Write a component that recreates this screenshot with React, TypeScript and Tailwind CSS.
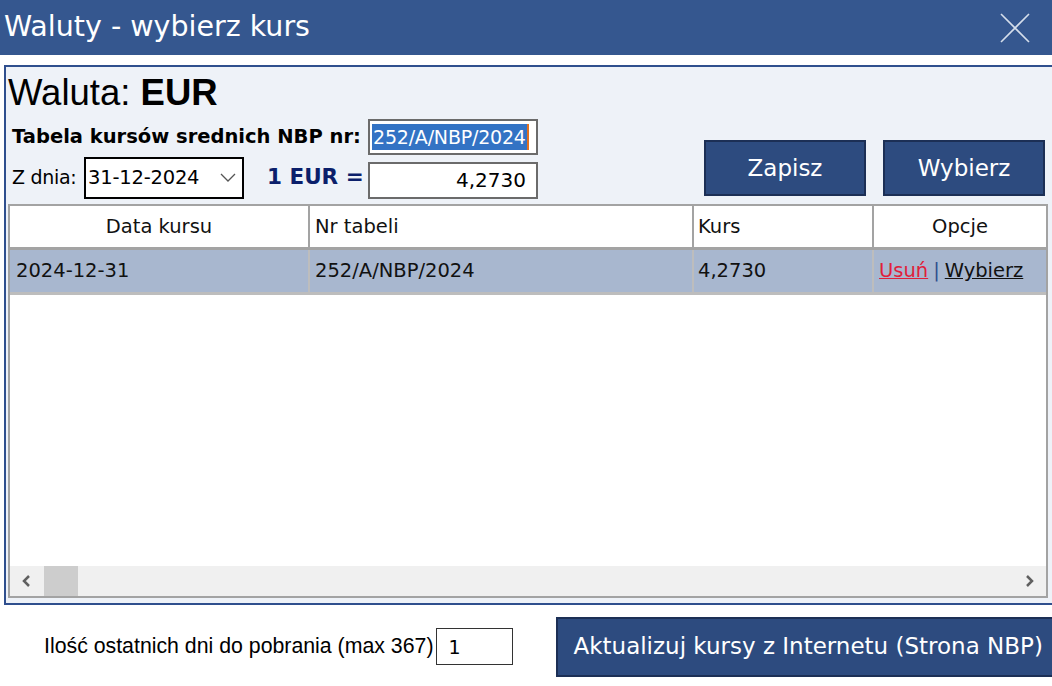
import { useState } from "react";

const rows = [
  { date: "2024-12-31", nr: "252/A/NBP/2024", kurs: "4,2730" },
];

const App = () => {
  const [days, setDays] = useState<string>("1");

  return (
    <div className="w-[1052px] h-[686px] bg-white overflow-hidden flex flex-col font-['DejaVu_Sans',sans-serif] text-black">
      {/* pasek tytulu */}
      <div className="h-[55px] bg-[#35578f] flex items-center justify-between pl-[4px] pr-[21px] shrink-0">
        <span className="text-white text-[28.5px] leading-none">Waluty - wybierz kurs</span>
        <svg width="32" height="32" viewBox="0 0 32 32">
          <path d="M2 2 L30 30 M30 2 L2 30" stroke="#d5deeb" strokeWidth="1.6" />
        </svg>
      </div>

      <div className="h-[10px] shrink-0" />

      {/* panel glowny */}
      <div className="ml-[4px] h-[540px] border-l-2 border-t-2 border-b-2 border-[#2f4f8e] bg-[#eef2f8] flex flex-col pl-[2px] pr-[4px] shrink-0">
        <div className="flex h-[137px] shrink-0">
          <div className="flex flex-col w-[540px]">
            <div className="h-[52px] flex items-center font-['Liberation_Sans',sans-serif] text-[36.5px] leading-none">
              Waluta:&nbsp;<b>EUR</b>
            </div>
            <div className="flex items-center h-[36px] pl-[4px]">
              <span className="font-bold text-[19.5px] w-[356px] whitespace-nowrap">Tabela kursów srednich NBP nr:</span>
              <div className="w-[170px] h-[36px] border-2 border-[#6b6b6b] bg-white flex items-center px-[2px]">
                <span className="bg-[#3373c4] text-white text-[19px] tracking-[-0.2px] px-[1px] leading-[26px] whitespace-nowrap">252/A/NBP/2024</span>
                <span className="w-[2px] h-[26px] bg-[#e07020]" />
              </div>
            </div>
            <div className="flex items-center h-[43px] pl-[4px] mt-[1px]">
              <span className="text-[19px] w-[72px] tracking-[-0.3px] whitespace-nowrap">Z dnia:</span>
              <div className="w-[160px] h-[42px] border-2 border-black bg-white flex items-center justify-between pl-[2px] pr-[6px]">
                <span className="text-[19.5px] tracking-[-0.2px]">31-12-2024</span>
                <svg width="16" height="10" viewBox="0 0 16 10">
                  <path d="M1 1 L8 8 L15 1" fill="none" stroke="#555" strokeWidth="1.3" />
                </svg>
              </div>
              <span className="font-bold text-[#0b1f6b] text-[21.5px] w-[124px] pl-[23px] whitespace-nowrap">1 EUR =</span>
              <div className="w-[170px] h-[37px] border-2 border-[#6b6b6b] bg-white flex items-center justify-end pr-[10px] mt-[5px]">
                <span className="text-[20px]">4,2730</span>
              </div>
            </div>
          </div>
          <div className="flex gap-[17px] pl-[156px] pt-[73px]">
            <button className="w-[162px] h-[56px] bg-[#2d4b7f] border-2 border-[#1c2f55] text-white text-[23px]">Zapisz</button>
            <button className="w-[162px] h-[56px] bg-[#2d4b7f] border-2 border-[#1c2f55] text-white text-[23px]">Wybierz</button>
          </div>
        </div>

        {/* siatka */}
        <div className="h-[394px] border-2 border-[#a3a3a3] bg-white flex flex-col shrink-0">
          <div className="flex h-[44px] border-b-[3px] border-[#a3a3a3] text-[19.5px] text-[#111]">
            <div className="w-[300px] border-r-2 border-[#a3a3a3] flex items-center justify-center">Data kursu</div>
            <div className="w-[384px] border-r-2 border-[#a3a3a3] flex items-center pl-[5px]">Nr tabeli</div>
            <div className="w-[180px] border-r-2 border-[#a3a3a3] flex items-center pl-[4px]">Kurs</div>
            <div className="flex-1 flex items-center justify-center">Opcje</div>
          </div>
          {rows.map((r) => (
            <div key={r.nr} className="flex h-[45px] bg-[#a8b7cf] border-b-[3px] border-[#bdbdbd] text-[19.5px] text-[#111]">
              <div className="w-[300px] border-r-2 border-[#bdbdbd] flex items-center pl-[6px]">{r.date}</div>
              <div className="w-[384px] border-r-2 border-[#bdbdbd] flex items-center pl-[5px]">{r.nr}</div>
              <div className="w-[180px] border-r-2 border-[#bdbdbd] flex items-center pl-[4px]">{r.kurs}</div>
              <div className="flex-1 flex items-center pl-[5px] whitespace-nowrap">
                <a href="#" className="text-[#e0203a] underline">Usuń</a>
                <span className="text-[#2f4f8e] px-[5px]">|</span>
                <a href="#" className="text-[#111] underline">Wybierz</a>
              </div>
            </div>
          ))}
          <div className="flex-1" />
          <div className="h-[30px] bg-[#f0f0f0] flex items-center">
            <div className="w-[34px] flex items-center justify-center">
              <svg width="10" height="12" viewBox="0 0 10 12"><path d="M7 1 L2 6 L7 11" fill="none" stroke="#606060" strokeWidth="2.5" /></svg>
            </div>
            <div className="w-[34px] h-[30px] bg-[#cdcdcd]" />
            <div className="flex-1" />
            <div className="w-[34px] flex items-center justify-center">
              <svg width="10" height="12" viewBox="0 0 10 12"><path d="M3 1 L8 6 L3 11" fill="none" stroke="#606060" strokeWidth="2.5" /></svg>
            </div>
          </div>
        </div>
      </div>

      {/* dol */}
      <div className="flex items-center h-[81px] pt-[2px]">
        <span className="shrink-0 ml-[44px] font-['Liberation_Sans',sans-serif] text-[21.3px] whitespace-nowrap">Ilość ostatnich dni do pobrania (max 367)</span>
        <input
          value={days}
          onChange={(e) => setDays(e.target.value)}
          className="shrink-0 ml-[3px] w-[77px] h-[37px] border border-[#333] bg-white px-[11px] text-[19px] outline-none"
        />
        <button className="shrink-0 ml-[43px] w-[510px] h-[60px] bg-[#2d4b7f] border-2 border-[#1c2f55] text-white text-[23px] text-left pl-[15px] whitespace-nowrap">
          Aktualizuj kursy z Internetu (Strona NBP)
        </button>
      </div>
    </div>
  );
};

export default App;
